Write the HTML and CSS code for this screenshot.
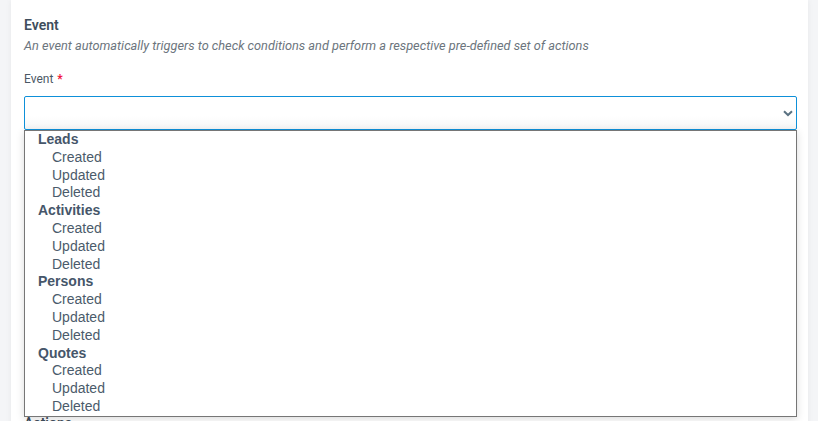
FILE: index.html
```html
<!DOCTYPE html>
<html lang="en">
<head>
  <meta charset="UTF-8">
  <meta name="viewport" content="width=device-width, initial-scale=1.0">
  <title>Workflow Event</title>
  <link rel="stylesheet" href="styles.css">
</head>
<body>
<div class="card">
  <!-- Event section -->
  <h3 class="section-title">Event</h3>
  <p class="section-info">An event automatically triggers to check conditions and perform a respective pre-defined set of actions</p>

  <div class="field">
    <label class="field-label">Event <span class="required">*</span></label>
    <div class="select-wrap">
      <div class="select-box">
        <svg class="chevron" width="10" height="7" viewBox="0 0 10 7">
          <path d="M1 1.2 L5 5 L9 1.2" fill="none" stroke="#5b7282" stroke-width="2"/>
        </svg>
      </div>

      <!-- open dropdown -->
      <ul class="dropdown">
        <li class="group">Leads</li>
        <li class="option">Created</li>
        <li class="option">Updated</li>
        <li class="option">Deleted</li>
        <li class="group">Activities</li>
        <li class="option">Created</li>
        <li class="option">Updated</li>
        <li class="option">Deleted</li>
        <li class="group">Persons</li>
        <li class="option">Created</li>
        <li class="option">Updated</li>
        <li class="option">Deleted</li>
        <li class="group">Quotes</li>
        <li class="option">Created</li>
        <li class="option">Updated</li>
        <li class="option">Deleted</li>
      </ul>
    </div>
  </div>

  <h3 class="section-title actions-title">Actions</h3>
</div>
</body>
</html>
```

FILE: styles.css
```css
body {
  margin: 0;
  background-color: #f4f5f7;
  font-family: Roboto, "Liberation Sans", Arial, sans-serif;
}
.card {
  background: #fff;
  margin-left: 11px;
  width: 773px;
  padding: 15px 11px 10px 13px;
  box-shadow: 0 0 6px rgba(0, 0, 0, 0.06);
}
.section-title {
  margin: 0;
  font-size: 14px;
  font-weight: 600;
  line-height: 20px;
  color: #3e4d5c;
}
.section-info {
  margin: 2px 0 0;
  font-size: 12.75px;
  font-style: italic;
  line-height: 18px;
  color: #6c757d;
}
.field {
  margin-top: 16px;
}
.field-label {
  display: block;
  font-size: 12px;
  line-height: 16px;
  color: #4b5866;
}
.required {
  color: #f0143c;
  font-weight: 700;
  margin-left: 1px;
}
.select-wrap {
  position: relative;
  margin-top: 9px;
}
.select-box {
  height: 32px;
  border: 1px solid #0e90d9;
  border-radius: 2px;
  background: linear-gradient(#fff 60%, #f6f6f6);
  display: flex;
  align-items: center;
  justify-content: flex-end;
  padding-right: 3px;
}
.chevron {
  display: block;
  margin-top: 1px;
}
.dropdown {
  position: absolute;
  top: 34px;
  left: 0;
  right: 0;
  margin: 0;
  padding: 0;
  list-style: none;
  background: #fff;
  border: 1px solid #767676;
  box-shadow: 0 2px 8px rgba(0, 0, 0, 0.15);
  font-family: "Liberation Sans", Arial, sans-serif;
  font-size: 14px;
  line-height: 17.8px;
  color: #4b5b6b;
  z-index: 2;
}
.dropdown .group {
  font-weight: 700;
  padding-left: 13px;
  color: #46566a;
}
.dropdown .option {
  padding-left: 27px;
}
.actions-title {
  margin-top: 283px;
}
```
